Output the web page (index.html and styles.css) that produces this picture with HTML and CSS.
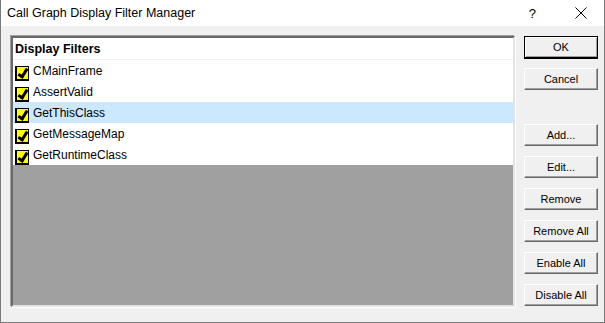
FILE: index.html
```html
<!DOCTYPE html>
<html lang="en">
<head>
  <meta charset="UTF-8">
  <title>Call Graph Display Filter Manager</title>
  <link rel="stylesheet" href="styles.css">
</head>
<body>
  <div class="window">
    <div class="titlebar">
      <span class="title">Call Graph Display Filter Manager</span>
      <span class="help">?</span>
      <svg class="close" width="12" height="12" viewBox="0 0 12 12">
        <path d="M0.5 0.5 L11.5 11.5 M11.5 0.5 L0.5 11.5" stroke="#000" stroke-width="1" fill="none"/>
      </svg>
    </div>
    <div class="content">
      <div class="listbox">
        <div class="list-head">Display Filters</div>
        <div class="row"><span class="check"></span>CMainFrame</div>
        <div class="row"><span class="check"></span>AssertValid</div>
        <div class="row selected"><span class="check"></span>GetThisClass</div>
        <div class="row"><span class="check"></span>GetMessageMap</div>
        <div class="row"><span class="check"></span>GetRuntimeClass</div>
        <div class="empty"></div>
      </div>
      <div class="buttons">
        <button class="btn default">OK</button>
        <button class="btn">Cancel</button>
        <button class="btn spaced">Add...</button>
        <button class="btn">Edit...</button>
        <button class="btn">Remove</button>
        <button class="btn">Remove All</button>
        <button class="btn">Enable All</button>
        <button class="btn">Disable All</button>
      </div>
    </div>
  </div>
</body>
</html>
```

FILE: styles.css
```css
body {
  margin: 0;
  font-family: "Liberation Sans", Arial, sans-serif;
  color: #000;
}
.window {
  width: 605px;
  height: 323px;
  box-sizing: border-box;
  border: 1px solid #7a7a7a;
  border-top: none;
  background: #f0f0f0;
  overflow: hidden;
}
.titlebar {
  height: 26px;
  background: #fff;
  display: flex;
  align-items: center;
  padding-left: 6px;
  font-size: 12.5px;
}
.title {
  flex: 1;
}
.help {
  font-size: 13px;
  margin-right: 39px;
}
.close {
  margin-right: 17px;
}
.content {
  display: flex;
  padding: 10px 0 0 9px;
  gap: 9px;
}
.listbox {
  width: 504px;
  height: 271px;
  box-sizing: border-box;
  border: 2px solid;
  border-color: #696969 #e3e3e3 #e3e3e3 #696969;
  box-shadow: -1px -1px 0 #a0a0a0, 1px 1px 0 #fff;
  display: flex;
  flex-direction: column;
  background: #fff;
  margin-left: 1px;
}
.list-head {
  height: 22px;
  line-height: 22px;
  padding-left: 2px;
  font-weight: bold;
  font-size: 12.5px;
  border-bottom: 1px solid #f0f0f0;
  box-sizing: border-box;
}
.row {
  height: 21px;
  display: flex;
  align-items: center;
  font-size: 12px;
  padding-left: 2px;
}
.row.selected {
  background: #cce8ff;
}
.check {
  width: 11px;
  height: 12px;
  background: #ffff00;
  border: 1px solid #000;
  border-left-width: 2px;
  border-bottom-width: 2px;
  margin: 5px 4px 0 0;
  position: relative;
}
.check::after {
  content: "";
  position: absolute;
  left: 3px;
  top: 0;
  width: 3px;
  height: 8px;
  border: solid #000;
  border-width: 0 3px 3px 0;
  transform: rotate(32deg);
}
.empty {
  flex: 1;
  background: #a0a0a0;
}
.buttons {
  display: flex;
  flex-direction: column;
  width: 74px;
}
.btn {
  height: 22px;
  box-sizing: border-box;
  margin: 0 0 10px 0;
  padding: 0;
  font-family: "Liberation Sans", Arial, sans-serif;
  font-size: 11px;
  color: #000;
  background: #f0f0f0;
  border: 1px solid;
  border-color: #fff #696969 #696969 #fff;
  box-shadow: inset -1px -1px 0 #a0a0a0;
}
.btn.default {
  height: 23px;
  border: 1px solid #000;
  border-bottom-width: 2px;
  box-shadow: inset 1px 1px 0 #fff, inset -1px -1px 0 #a0a0a0;
  margin-bottom: 9px;
}
.btn.spaced {
  margin-top: 24px;
}
```
